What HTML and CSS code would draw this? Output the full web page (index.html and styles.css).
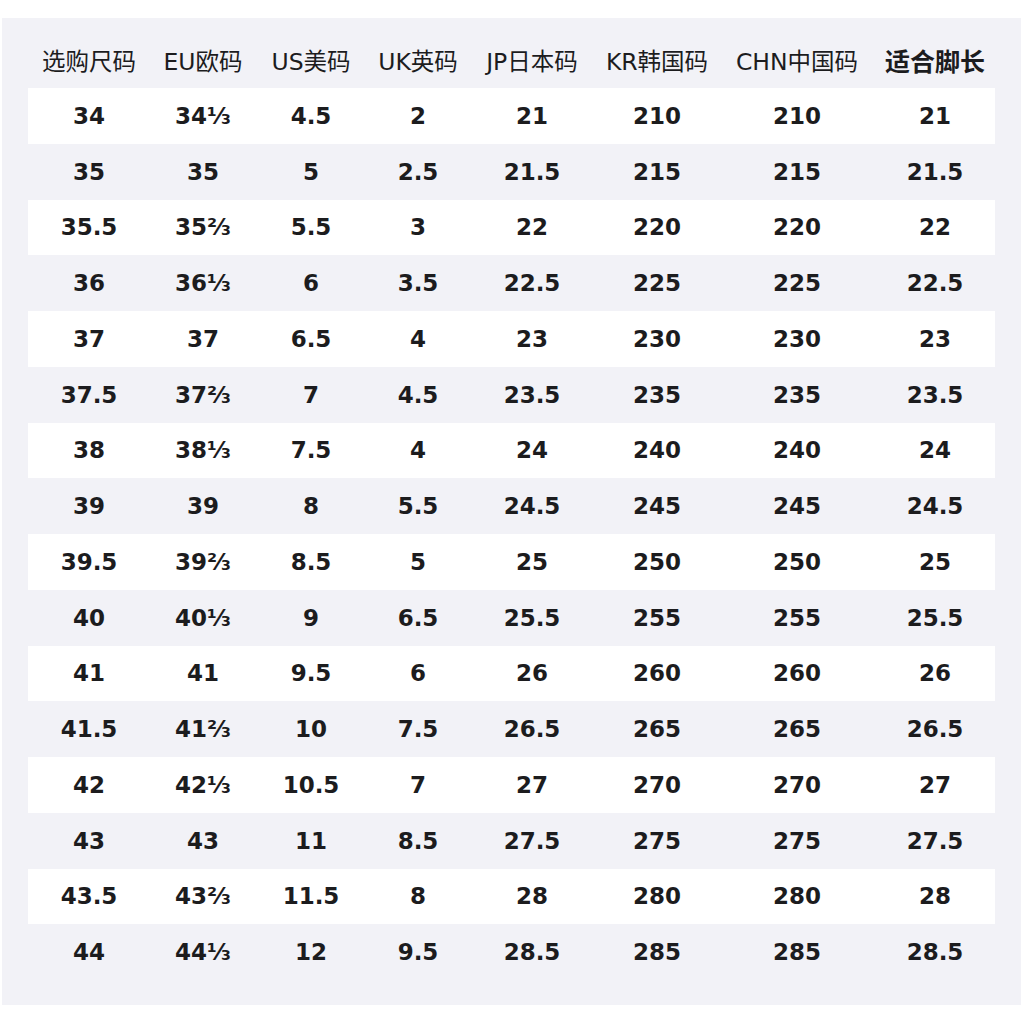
FILE: index.html
```html
<!DOCTYPE html>
<html lang="zh">
<head>
<meta charset="utf-8">
<link rel="stylesheet" href="styles.css">
</head>
<body>
<div class="panel">
  <div class="row head">
    <div>选购尺码</div><div>EU欧码</div><div>US美码</div><div>UK英码</div><div>JP日本码</div><div>KR韩国码</div><div>CHN中国码</div><div class="strong">适合脚长</div>
  </div>
  <div class="row"><div>34</div><div>34⅓</div><div>4.5</div><div>2</div><div>21</div><div>210</div><div>210</div><div>21</div></div>
  <div class="row"><div>35</div><div>35</div><div>5</div><div>2.5</div><div>21.5</div><div>215</div><div>215</div><div>21.5</div></div>
  <div class="row"><div>35.5</div><div>35⅔</div><div>5.5</div><div>3</div><div>22</div><div>220</div><div>220</div><div>22</div></div>
  <div class="row"><div>36</div><div>36⅓</div><div>6</div><div>3.5</div><div>22.5</div><div>225</div><div>225</div><div>22.5</div></div>
  <div class="row"><div>37</div><div>37</div><div>6.5</div><div>4</div><div>23</div><div>230</div><div>230</div><div>23</div></div>
  <div class="row"><div>37.5</div><div>37⅔</div><div>7</div><div>4.5</div><div>23.5</div><div>235</div><div>235</div><div>23.5</div></div>
  <div class="row"><div>38</div><div>38⅓</div><div>7.5</div><div>4</div><div>24</div><div>240</div><div>240</div><div>24</div></div>
  <div class="row"><div>39</div><div>39</div><div>8</div><div>5.5</div><div>24.5</div><div>245</div><div>245</div><div>24.5</div></div>
  <div class="row"><div>39.5</div><div>39⅔</div><div>8.5</div><div>5</div><div>25</div><div>250</div><div>250</div><div>25</div></div>
  <div class="row"><div>40</div><div>40⅓</div><div>9</div><div>6.5</div><div>25.5</div><div>255</div><div>255</div><div>25.5</div></div>
  <div class="row"><div>41</div><div>41</div><div>9.5</div><div>6</div><div>26</div><div>260</div><div>260</div><div>26</div></div>
  <div class="row"><div>41.5</div><div>41⅔</div><div>10</div><div>7.5</div><div>26.5</div><div>265</div><div>265</div><div>26.5</div></div>
  <div class="row"><div>42</div><div>42⅓</div><div>10.5</div><div>7</div><div>27</div><div>270</div><div>270</div><div>27</div></div>
  <div class="row"><div>43</div><div>43</div><div>11</div><div>8.5</div><div>27.5</div><div>275</div><div>275</div><div>27.5</div></div>
  <div class="row"><div>43.5</div><div>43⅔</div><div>11.5</div><div>8</div><div>28</div><div>280</div><div>280</div><div>28</div></div>
  <div class="row"><div>44</div><div>44⅓</div><div>12</div><div>9.5</div><div>28.5</div><div>285</div><div>285</div><div>28.5</div></div>
</div>
</body>
</html>
```
FILE: styles.css
```css
html, body {
  margin: 0;
  padding: 0;
  background: #ffffff;
}
body {
  font-family: "DejaVu Sans", "Noto Sans CJK SC", sans-serif;
  color: #1c1c1e;
}
.panel {
  margin: 18px 0 0 2px;
  width: 1019px;
  box-sizing: border-box;
  padding: 14px 26px 25px 26px;
  background: #f2f2f7;
}
.row {
  display: grid;
  grid-template-columns: 122px 106px 110px 104px 124px 126px 154px 122px;
  height: 55.75px;
  align-items: center;
  text-align: center;
  font-size: 23px;
  font-weight: bold;
}
.row:nth-child(even) {
  background: #ffffff;
}
.row.head {
  height: 56px;
  font-weight: normal;
  font-size: 23.5px;
  white-space: nowrap;
}
.row.head .strong {
  font-weight: bold;
  font-size: 25px;
}
```
